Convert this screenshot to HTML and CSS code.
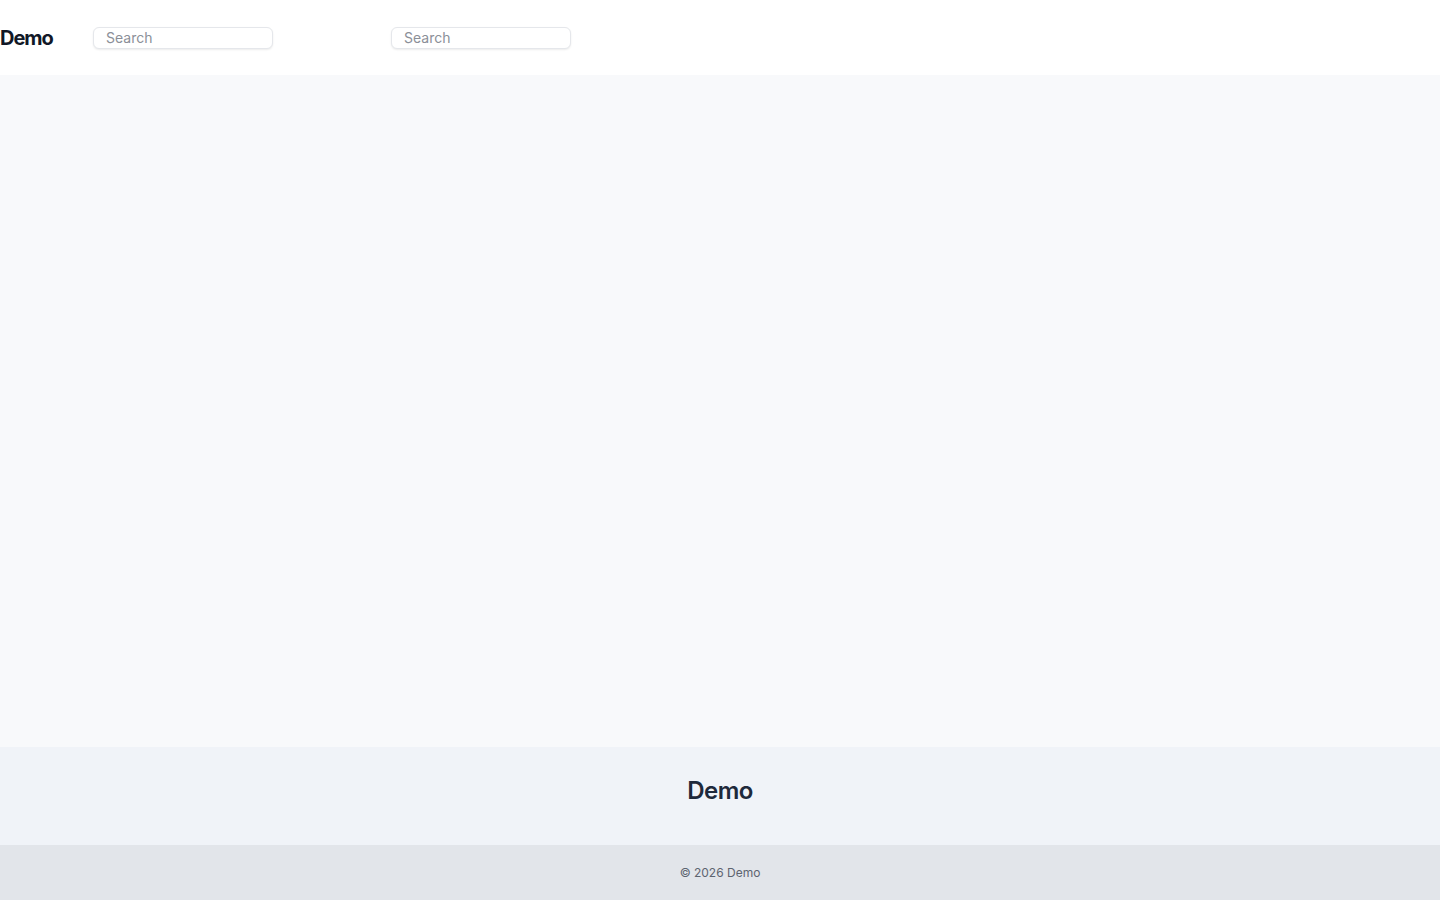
FILE: index.html
```html
<!DOCTYPE html>
<html lang="en">
<head>
<meta charset="utf-8">
<title>Demo</title>
<link rel="stylesheet" href="styles.css">
</head>
<body>
<div class="page">
  <header class="topbar">
    <div class="brand">Demo</div>
    <input class="search" type="text" placeholder="Search">
    <input class="search search-second" type="text" placeholder="Search">
  </header>
  <main class="content"></main>
  <section class="footer-brand">
    <h2 class="footer-title">Demo</h2>
  </section>
  <footer class="copyright">© 2026 Demo</footer>
</div>
</body>
</html>
```

FILE: styles.css
```css
* { box-sizing: border-box; }
html, body { margin: 0; padding: 0; }
body {
  font-family: Inter, "Noto Sans", "Liberation Sans", sans-serif;
  color: #1f2937;
  background: #ffffff;
}
.page {
  display: flex;
  flex-direction: column;
  min-height: 900px;
}
.topbar {
  height: 75px;
  display: flex;
  align-items: center;
  background: #ffffff;
}
.brand {
  font-size: 20px;
  font-weight: 700;
  letter-spacing: -1px;
  color: #111827;
  width: 93px;
}
.search {
  width: 180px;
  height: 22px;
  padding: 0 12px;
  border: 1px solid #e5e7eb;
  border-radius: 6px;
  box-shadow: 0 1px 2px rgba(0,0,0,0.08);
  font-family: Inter, "Noto Sans", sans-serif;
  font-size: 14px;
  color: #111827;
  background: #ffffff;
  outline: none;
}
.search::placeholder { color: #8b8f98; }
.search-second { margin-left: 118px; }
.content {
  height: 672px;
  background: #f8f9fb;
}
.footer-brand {
  height: 98px;
  background: #f0f3f8;
  display: flex;
  align-items: center;
  justify-content: center;
}
.footer-title {
  margin: 0 0 12px;
  font-size: 24px;
  font-weight: 600;
  letter-spacing: -0.6px;
  color: #1e293b;
}
.copyright {
  height: 55px;
  background: #e2e5ea;
  display: flex;
  align-items: center;
  justify-content: center;
  font-size: 12px;
  color: #5d6470;
}
```
